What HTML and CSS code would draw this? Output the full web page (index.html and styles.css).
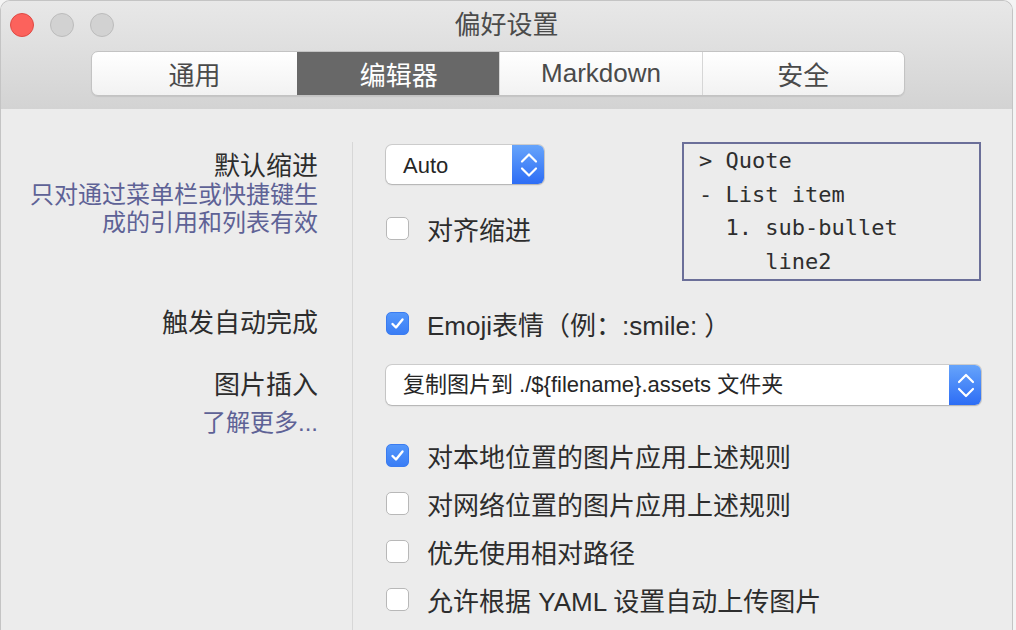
FILE: index.html
```html
<!DOCTYPE html>
<html lang="zh-CN">
<head>
<meta charset="utf-8">
<title>偏好设置</title>
<link rel="stylesheet" href="styles.css">
</head>
<body>
<div class="window">
  <header class="titlebar">
    <div class="title-row">
      <div class="lights">
        <span class="light close"></span>
        <span class="light"></span>
        <span class="light"></span>
      </div>
      <div class="title">偏好设置</div>
      <div></div>
    </div>
    <nav class="segmented">
      <div class="seg">通用</div>
      <div class="seg active">编辑器</div>
      <div class="seg">Markdown</div>
      <div class="seg">安全</div>
    </nav>
  </header>

  <main class="form">
    <div class="label-cell row-indent">
      <div class="label">默认缩进</div>
      <div class="desc">只对通过菜单栏或快捷键生<br>成的引用和列表有效</div>
    </div>
    <div class="control-cell row-indent">
      <div class="indent-controls">
        <div class="indent-left">
          <div class="select small">
            <div class="select-value">Auto</div>
            <div class="select-arrow">
              <svg width="32" height="39" viewBox="0 0 32 39"><path d="M10 16.5 L17 9.5 L24 16.5 M10 23.5 L17 30.5 L24 23.5" fill="none" stroke="#fff" stroke-width="2.2" stroke-linecap="round" stroke-linejoin="round"/></svg>
            </div>
          </div>
          <label class="check first-check"><span class="box"></span>对齐缩进</label>
        </div>
        <div class="quote">&gt; Quote
- List item
  1. sub-bullet
     line2</div>
      </div>
    </div>

    <div class="label-cell row-auto">
      <div class="label">触发自动完成</div>
    </div>
    <div class="control-cell row-auto">
      <label class="check"><span class="box on"><svg width="23" height="23" viewBox="0 0 23 23"><path d="M6.5 12 L10 15.5 L16.5 7.5" fill="none" stroke="#fff" stroke-width="2.4" stroke-linecap="round" stroke-linejoin="round"/></svg></span>Emoji表情（例：:smile: ）</label>
    </div>

    <div class="label-cell row-image">
      <div class="label">图片插入</div>
      <div class="link">了解更多...</div>
    </div>
    <div class="control-cell row-image">
      <div class="select wide">
        <div class="select-value">复制图片到 ./${filename}.assets 文件夹</div>
        <div class="select-arrow">
          <svg width="32" height="40" viewBox="0 0 32 40"><path d="M10 17 L17 10 L24 17 M10 24 L17 31 L24 24" fill="none" stroke="#fff" stroke-width="2.2" stroke-linecap="round" stroke-linejoin="round"/></svg>
        </div>
      </div>
      <div class="check-list">
        <label class="check"><span class="box on"><svg width="23" height="23" viewBox="0 0 23 23"><path d="M6.5 12 L10 15.5 L16.5 7.5" fill="none" stroke="#fff" stroke-width="2.4" stroke-linecap="round" stroke-linejoin="round"/></svg></span>对本地位置的图片应用上述规则</label>
        <label class="check"><span class="box"></span>对网络位置的图片应用上述规则</label>
        <label class="check"><span class="box"></span>优先使用相对路径</label>
        <label class="check"><span class="box"></span>允许根据 YAML 设置自动上传图片</label>
      </div>
    </div>
  </main>
</div>
</body>
</html>
```

FILE: styles.css
```css
html, body {
  margin: 0;
  padding: 0;
}

body {
  background: #f4f4f4;
  font-family: "Liberation Sans", "Noto Sans CJK SC", sans-serif;
  overflow: hidden;
}

.window {
  width: 1013px;
  height: 630px;
  box-sizing: border-box;
  border: 1px solid #c4c4c4;
  border-bottom: none;
  border-radius: 10px 10px 0 0;
  background: #ececec;
  overflow: hidden;
  display: flex;
  flex-direction: column;
}

.titlebar {
  height: 108px;
  flex: none;
  background: linear-gradient(#e8e8e8, #d3d3d3);
}

.title-row {
  display: grid;
  grid-template-columns: 1fr auto 1fr;
  align-items: center;
  height: 47px;
}

.lights {
  display: flex;
  gap: 16px;
  padding-left: 9px;
}

.light {
  width: 24px;
  height: 24px;
  box-sizing: border-box;
  border-radius: 50%;
  background: #d2d2d2;
  border: 1px solid #bcbcbc;
}

.light.close {
  background: #fc625c;
  border-color: #df4a44;
}

.title {
  font-size: 26px;
  color: #4b4b4b;
  line-height: 32px;
}

.segmented {
  display: flex;
  margin: 3px 0 0 90px;
  width: 814px;
  height: 45px;
  box-sizing: border-box;
  border: 1px solid #c3c3c3;
  border-radius: 7px;
  background: linear-gradient(#ffffff, #f2f2f2);
  overflow: hidden;
  box-shadow: 0 1px 1px rgba(0, 0, 0, 0.08);
}

.seg {
  flex: 1;
  display: flex;
  align-items: center;
  justify-content: center;
  font-size: 26px;
  color: #4a4a4a;
  border-left: 1px solid #d6d6d6;
}

.seg:first-child {
  border-left: none;
  flex: 0 0 205px;
}

.seg.active {
  background: #686868;
  color: #ffffff;
  border-left-color: #686868;
}

.form {
  flex: 1;
  display: grid;
  grid-template-columns: 352px 1fr;
  grid-template-rows: auto auto 1fr;
  padding-top: 33px;
}

.label-cell {
  border-right: 1px solid #d7d7d7;
  text-align: right;
  padding-right: 34px;
}

.control-cell {
  padding-left: 33px;
  padding-right: 31px;
}

.label {
  font-size: 26px;
  line-height: 32px;
  color: #2d2d2d;
}

.desc {
  font-size: 24px;
  line-height: 28px;
  color: #5e6296;
  margin-top: -1px;
}

.link {
  font-size: 24px;
  line-height: 28px;
  color: #5e6296;
  margin-top: 8px;
}

.label-cell.row-indent {
  padding-top: 8px;
}

.indent-controls {
  display: flex;
  justify-content: space-between;
  align-items: flex-start;
}

.indent-left {
  padding-top: 3px;
}

.select.small .select-value {
  line-height: 41px;
}

.first-check {
  margin-top: 28px;
}

.quote {
  width: 299px;
  box-sizing: border-box;
  border: 2px solid #6b6f99;
  padding: 0 0 1px 15px;
  font-family: "DejaVu Sans Mono", monospace;
  font-size: 22px;
  line-height: 33.5px;
  color: #2e2e2e;
  white-space: pre;
}

.row-auto {
  padding-top: 26px;
  padding-bottom: 25px;
}

.label-cell.row-image {
  padding-top: 5px;
}

.control-cell.row-image {
  padding-top: 1px;
}

.select {
  display: flex;
  height: 39px;
  box-sizing: border-box;
  border-radius: 6px;
  background: #ffffff;
  box-shadow: 0 0 0 1px rgba(0, 0, 0, 0.13), 0 1px 2px rgba(0, 0, 0, 0.14);
  overflow: hidden;
}

.select.small {
  width: 158px;
}

.select.wide {
  height: 40px;
}

.select-value {
  flex: 1;
  padding-left: 17px;
  font-size: 22px;
  line-height: 39px;
  color: #262626;
  white-space: nowrap;
}

.select-arrow {
  width: 32px;
  flex: none;
  display: flex;
  align-items: center;
  justify-content: center;
  background: linear-gradient(#66a4fb, #2d6df5);
}

.check-list {
  margin-top: 34px;
  display: flex;
  flex-direction: column;
  gap: 16px;
}

.check {
  display: flex;
  align-items: center;
  height: 32px;
  font-size: 26px;
  color: #2d2d2d;
  white-space: nowrap;
}

.box {
  width: 23px;
  height: 23px;
  box-sizing: border-box;
  border: 1px solid #b8b8b8;
  border-radius: 5px;
  background: #ffffff;
  margin-right: 18px;
  flex: none;
  display: flex;
  align-items: center;
  justify-content: center;
}

.box svg {
  margin: -1px;
}

.box.on {
  background: linear-gradient(#5497fb, #3a7df5);
  border-color: #3b7cf0;
}
```
